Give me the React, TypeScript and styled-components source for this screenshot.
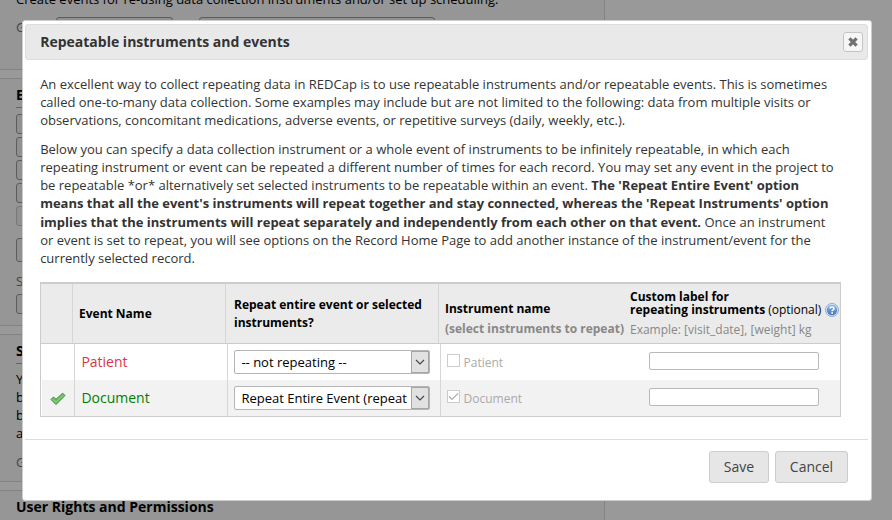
import React from "react";
import styled, { createGlobalStyle } from "styled-components";

const GlobalStyle = createGlobalStyle`
  * { box-sizing: border-box; }
  html, body { margin: 0; padding: 0; }
  body { background: #999; overflow: hidden; font-family: "Open Sans", sans-serif; font-size: 13px; color: #000; }
`;

const Page = styled.div`
  position: relative;
  width: 892px;
  height: 520px;
  overflow: hidden;
  background: #999;
`;

const Backdrop = styled.div`
  width: 605px;
  display: flex;
  flex-direction: column;
  gap: 8px;
`;

const Panel = styled.section<{ $h: number; $top?: boolean }>`
  height: ${(p) => p.$h}px;
  padding-left: 16px;
  background: #969696;
  border: 1px solid #838383;
  border-left: 0;
  border-top-width: ${(p) => (p.$top ? 0 : 1)}px;
  border-radius: 0 ${(p) => (p.$top ? 0 : 10)}px 10px 0;
  overflow: hidden;
`;

const Line = styled.div<{ $mt?: number; $dim?: boolean }>`
  margin-top: ${(p) => p.$mt ?? 0}px;
  height: 18px;
  line-height: 18px;
  white-space: nowrap;
  color: ${(p) => (p.$dim ? "#444" : "#000")};
`;

const PanelHeading = styled.h2<{ $tall?: boolean }>`
  margin: 6px 0 0;
  height: ${(p) => (p.$tall ? 25 : 23)}px;
  line-height: 19px;
  font-size: 14px;
  font-weight: 700;
  border-bottom: 1px solid #666;
`;

const GhostRow = styled.div`
  display: flex;
  gap: 26px;
  margin: -11px 0 0 40px;
`;

const GhostButton = styled.div<{ $w?: number; $h?: number; $mt?: number; $dim?: boolean }>`
  width: ${(p) => p.$w ?? 60}px;
  height: ${(p) => p.$h ?? 20}px;
  margin-top: ${(p) => p.$mt ?? 3}px;
  border: 1px solid ${(p) => (p.$dim ? "#777" : "#5c5c5c")};
  border-radius: 3px;
  background: #909090;
`;

const Dialog = styled.div`
  position: absolute;
  left: 22px;
  top: 20px;
  width: 850px;
  height: 481px;
  padding: 3px 3px 0 2px;
  display: flex;
  flex-direction: column;
  background: #fff;
  border: 1px solid #ccc;
  border-radius: 3px;
  color: #333;
`;

const TitleBar = styled.header`
  height: 36px;
  flex: none;
  display: flex;
  align-items: center;
  justify-content: space-between;
  padding: 0 4px 0 14.2px;
  background: #e9e9e9;
  border: 1px solid #ddd;
  border-radius: 3px;
`;

const Title = styled.h1`
  margin: 0;
  font-size: 14px;
  line-height: 20px;
  font-weight: 700;
  white-space: nowrap;
`;

const CloseButton = styled.button`
  width: 20px;
  height: 20px;
  padding: 0;
  display: flex;
  align-items: center;
  justify-content: center;
  background: #f6f6f6;
  border: 1px solid #c5c5c5;
  border-radius: 3px;
`;

const Body = styled.div`
  padding: 15px 0 0 15px;
  height: 380px;
  border-bottom: 1px solid #ddd;
`;

const Paragraph = styled.p`
  margin: 0 0 10.45px 0.15px;
  font-size: 13px;
  line-height: 18.15px;
  white-space: nowrap;
`;

const Table = styled.div`
  width: 801px;
  margin-top: 15px;
  border: 1px solid #ccc;
  border-top-width: 2px;
  color: #000;
`;

const HeaderRow = styled.div`
  display: grid;
  grid-template-columns: 32px 153px 213px 1fr;
  height: 60px;
  background: #ebebeb;
  border-bottom: 1px solid #ccc;
`;

const HeadCell = styled.div<{ $pad?: number; $last?: boolean }>`
  display: flex;
  align-items: center;
  padding: ${(p) => (p.$last ? 2 : 0)}px 0 0 ${(p) => p.$pad ?? 6}px;
  border-right: ${(p) => (p.$last ? 0 : 1)}px solid #d6d6d6;
  font-size: 12px;
  line-height: 18px;
  font-weight: 700;
  white-space: nowrap;
`;

const InstrumentHead = styled.div`
  width: 185px;
  padding-top: 9px;
  line-height: 20px;
`;

const Muted = styled.div<{ $regular?: boolean }>`
  color: #888;
  font-weight: ${(p) => (p.$regular ? 400 : 700)};
  line-height: 20px;
`;

const LabelHead = styled.div`
  display: flex;
  flex-direction: column;
  padding-top: 2px;
`;

const LabelLine = styled.div`
  display: flex;
  align-items: center;
  height: 12.5px;
  line-height: 12px;
`;

const Example = styled(Muted)`
  margin-top: 4px;
`;

const Optional = styled.span`
  font-weight: 400;
  margin: 0 4px 0 3px;
`;

const Row = styled.div<{ $alt?: boolean }>`
  display: grid;
  grid-template-columns: 33px 153px 213px 1fr 191px;
  height: 36px;
  margin-left: 1px;
  background: ${(p) => (p.$alt ? "#f2f2f2" : "#fff")};
`;

const Cell = styled.div<{ $noBorder?: boolean; $pad?: number; $drop?: number }>`
  display: flex;
  align-items: center;
  padding-left: ${(p) => p.$pad ?? 6}px;
  padding-top: ${(p) => p.$drop ?? 0}px;
  border-right: ${(p) => (p.$noBorder ? 0 : 1)}px solid #d6d6d6;
  white-space: nowrap;
`;

const EventName = styled.span<{ $color: string }>`
  font-size: 14px;
  padding: 0 0 2px 0.4px;
  color: ${(p) => p.$color};
`;

const Select = styled.div`
  display: flex;
  width: 196px;
  height: 24px;
  border: 1px solid #b5b5b5;
  border-radius: 2px;
  background: #fff;
`;

const SelectText = styled.span`
  flex: 1;
  padding-left: 6.4px;
  line-height: 23px;
  font-size: 13px;
  overflow: hidden;
`;

const SelectArrow = styled.span`
  width: 18px;
  display: flex;
  align-items: center;
  justify-content: center;
  background: #e1e1e1;
  border: 1px solid #a5a5a5;
`;

const Checkbox = styled.span`
  width: 13px;
  height: 13px;
  margin: -3px 3.5px 0 0;
  display: flex;
  align-items: center;
  justify-content: center;
  border: 1px solid #ccc;
  background: #fff;
`;

const InstrumentName = styled.span`
  font-size: 12px;
  color: #aaa;
  padding-top: 1px;
`;

const TextInput = styled.input`
  width: 170px;
  height: 18px;
  margin-top: -2px;
  border: 1px solid #b9b9b9;
  border-radius: 2px;
  background: #fff;
`;

const Footer = styled.footer`
  display: flex;
  justify-content: flex-end;
  gap: 6px;
  padding: 11px 20px 0 0;
`;

const Button = styled.button<{ $w: number }>`
  width: ${(p) => p.$w}px;
  height: 32px;
  padding: 0 0 1px;
  font: 14px "Open Sans", sans-serif;
  color: #444;
  background: #e6e6e6;
  border: 1px solid #ccc;
  border-radius: 3px;
`;

const HelpIcon = () => (
  <svg width="14" height="14" viewBox="0 0 14 14">
    <defs>
      <linearGradient id="help" x1="0" y1="0" x2="0" y2="1">
        <stop offset="0" stopColor="#8fb5df" />
        <stop offset="1" stopColor="#3f74b5" />
      </linearGradient>
    </defs>
    <circle cx="7" cy="7" r="6.5" fill="#dce8f5" stroke="#7fa0cb" strokeWidth="0.9" />
    <circle cx="7" cy="7" r="5.2" fill="url(#help)" />
    <path d="M5 5.6C5 3.5 9 3.4 9 5.6C9 6.8 7.1 6.8 7.1 8.3" fill="none" stroke="#fff" strokeWidth="1.6" />
    <rect x="6.3" y="9.2" width="1.7" height="1.6" fill="#fff" />
  </svg>
);

const TickIcon = () => (
  <svg width="16" height="14" viewBox="0 0 16 14">
    <path d="M1 7.5L3.5 5L6 7.3L12.7 1.2L15 3.5L6 12.5Z" fill="#6cbd63" stroke="#3c8b3b" strokeWidth="1" strokeLinejoin="round" />
    <path d="M2.5 7.3L6 10.4L13.3 3.1" fill="none" stroke="#98d58c" strokeWidth="1" />
  </svg>
);

const Chevron = () => (
  <svg width="10" height="6" viewBox="0 0 10 6">
    <path d="M1 1L5 5L9 1" fill="none" stroke="#444" strokeWidth="1.1" />
  </svg>
);

const CheckMark = () => (
  <svg width="11" height="11" viewBox="0 0 11 11">
    <path d="M1 5.5L4 8.5L10 2.3" fill="none" stroke="#aaa" strokeWidth="1.2" />
  </svg>
);

const CloseIcon = () => (
  <svg width="10" height="10" viewBox="0 0 10 10">
    <path d="M1.4 1.4L8.6 8.6M8.6 1.4L1.4 8.6" stroke="#707070" strokeWidth="3.2" />
  </svg>
);

const rows = [
  { name: "Patient", color: "#dc3545", option: "-- not repeating --", on: false },
  { name: "Document", color: "#008000", option: "Repeat Entire Event (repeat", on: true },
];

export default function App() {
  return (
    <Page>
      <GlobalStyle />
      <Backdrop>
        <Panel $h={70} $top>
          <Line $mt={-10}>Create events for re-using data collection instruments and/or set up scheduling.</Line>
          <Line $mt={10} $dim>G</Line>
          <GhostRow>
            <GhostButton $w={117} $mt={-8} />
            <GhostButton $w={236} $mt={-8} />
          </GhostRow>
        </Panel>
        <Panel $h={248}>
          <PanelHeading>E</PanelHeading>
          <GhostButton $mt={6} />
          <GhostButton />
          <GhostButton />
          <GhostButton />
          <GhostButton $dim />
          <GhostButton $h={24} $mt={12} />
          <Line $mt={10} $dim>S</Line>
          <GhostButton $mt={4} />
        </Panel>
        <Panel $h={148}>
          <PanelHeading>S</PanelHeading>
          <Line $mt={6}>Y</Line>
          <Line>b</Line>
          <Line>b</Line>
          <Line>a</Line>
          <Line $mt={11} $dim>G</Line>
        </Panel>
        <Panel $h={60}>
          <PanelHeading $tall>User Rights and Permissions</PanelHeading>
        </Panel>
      </Backdrop>

      <Dialog>
        <TitleBar>
          <Title>Repeatable instruments and events</Title>
          <CloseButton aria-label="Close"><CloseIcon /></CloseButton>
        </TitleBar>
        <Body>
          <Paragraph>
            An excellent way to collect repeating data in REDCap is to use repeatable instruments and/or repeatable events. This is sometimes<br />
            called one-to-many data collection. Some examples may include but are not limited to the following: data from multiple visits or<br />
            observations, concomitant medications, adverse events, or repetitive surveys (daily, weekly, etc.).
          </Paragraph>
          <Paragraph>
            Below you can specify a data collection instrument or a whole event of instruments to be infinitely repeatable, in which each<br />
            repeating instrument or event can be repeated a different number of times for each record. You may set any event in the project to<br />
            be repeatable *or* alternatively set selected instruments to be repeatable within an event. <b>The 'Repeat Entire Event' option<br />
            means that all the event's instruments will repeat together and stay connected, whereas the 'Repeat Instruments' option<br />
            implies that the instruments will repeat separately and independently from each other on that event.</b> Once an instrument<br />
            or event is set to repeat, you will see options on the Record Home Page to add another instance of the instrument/event for the<br />
            currently selected record.
          </Paragraph>
          <Table>
            <HeaderRow>
              <HeadCell />
              <HeadCell>Event Name</HeadCell>
              <HeadCell $pad={8}><div>Repeat entire event or selected<br />instruments?</div></HeadCell>
              <HeadCell $pad={6} $last>
                <InstrumentHead>
                  Instrument name
                  <Muted>(select instruments to repeat)</Muted>
                </InstrumentHead>
                <LabelHead>
                  <LabelLine>Custom label for</LabelLine>
                  <LabelLine>repeating instruments<Optional>(optional)</Optional><HelpIcon /></LabelLine>
                  <Example $regular>Example: [visit_date], [weight] kg</Example>
                </LabelHead>
              </HeadCell>
            </HeaderRow>
            {rows.map((r) => (
              <Row key={r.name} $alt={r.on}>
                <Cell $pad={8} $drop={2}>{r.on && <TickIcon />}</Cell>
                <Cell><EventName $color={r.color}>{r.name}</EventName></Cell>
                <Cell>
                  <Select>
                    <SelectText>{r.option}</SelectText>
                    <SelectArrow><Chevron /></SelectArrow>
                  </Select>
                </Cell>
                <Cell $noBorder>
                  <Checkbox>{r.on && <CheckMark />}</Checkbox>
                  <InstrumentName>{r.name}</InstrumentName>
                </Cell>
                <Cell $noBorder $pad={0}><TextInput /></Cell>
              </Row>
            ))}
          </Table>
        </Body>
        <Footer>
          <Button $w={60}>Save</Button>
          <Button $w={73}>Cancel</Button>
        </Footer>
      </Dialog>
    </Page>
  );
}
